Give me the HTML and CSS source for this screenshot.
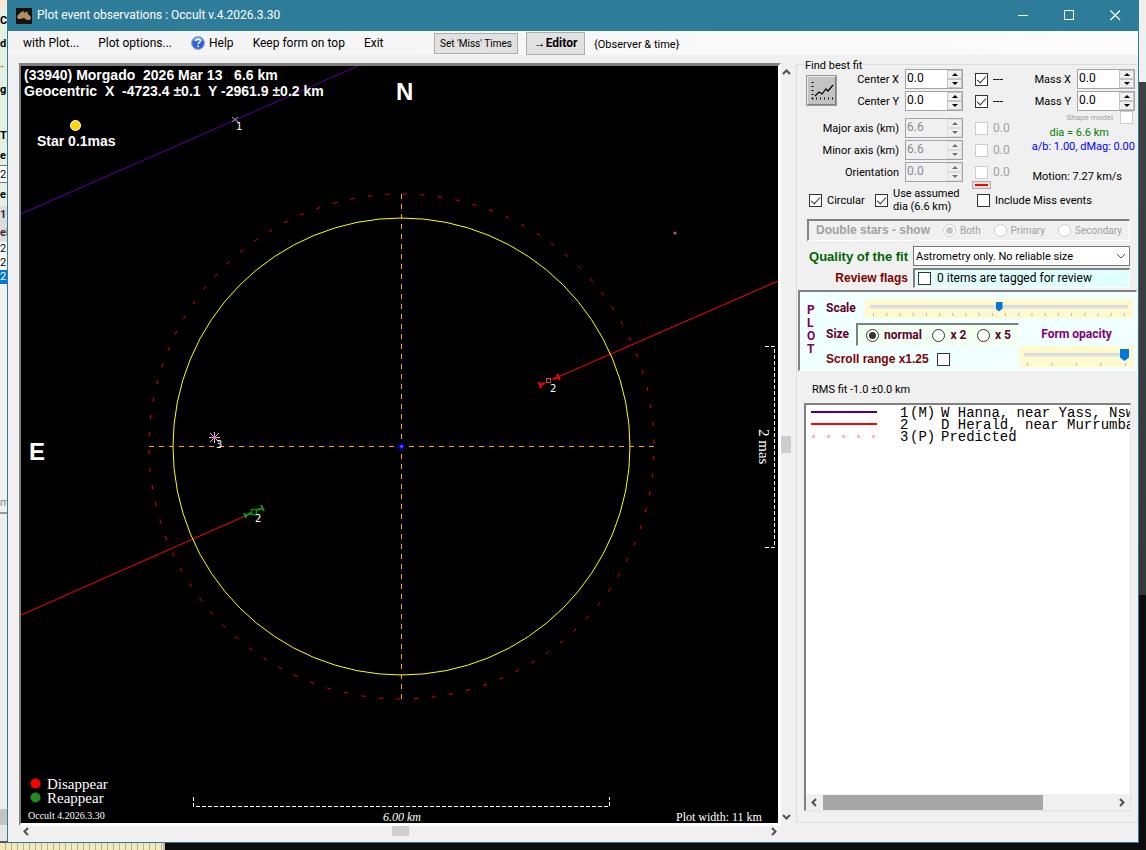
FILE: index.html
```html
<!DOCTYPE html>
<html lang="en">
<head>
    <meta charset="UTF-8">
    <meta name="viewport" content="width=device-width, initial-scale=1.0">
    <title>Plot event observations</title>
    <link rel="stylesheet" href="styles.css">
</head>
<body>
    <div class="desktop-row">
        <!-- edge of the window behind -->
        <div class="behind-left">
            <div class="peek peach"></div>
            <div class="peek tall">C</div>
            <div class="peek tall">d</div>
            <div class="peek tall orange">-</div>
            <div class="peek tall">g</div>
            <div class="peek tall"></div>
            <div class="peek tall">T</div>
            <div class="peek">e</div>
            <div class="peek boxed">2</div>
            <div class="peek tall">e</div>
            <div class="peek grey">1</div>
            <div class="peek grey">el</div>
            <div class="peek line">2</div>
            <div class="peek line">2</div>
            <div class="peek line selected">2</div>
            <div class="peek lower">m</div>
            <div class="peek rest"></div>
            <div class="peek thumb"></div>
            <div class="peek foot"></div>
        </div>

        <div class="window">
            <header class="titlebar">
                <svg class="app-icon" width="16" height="16" viewBox="0 0 16 16">
                    <rect width="16" height="16" fill="#15120f"/>
                    <path d="M1 8 L4 5 L7 3 L9 5 L11 3 L12 6 L15 9 L14 12 L11 12 L8 10 L4 11 L2 11 Z" fill="#b58d62"/>
                </svg>
                <h1>Plot event observations : Occult v.4.2026.3.30</h1>
                <button class="caption-btn" type="button" aria-label="Minimize">
                    <svg width="11" height="11"><path d="M0 5.5H10" stroke="#fff"/></svg>
                </button>
                <button class="caption-btn" type="button" aria-label="Maximize">
                    <svg width="11" height="11"><rect x="0.5" y="0.5" width="9" height="9" fill="none" stroke="#fff"/></svg>
                </button>
                <button class="caption-btn" type="button" aria-label="Close">
                    <svg width="11" height="11"><path d="M0.5 0.5L10 10M10 0.5L0.5 10" stroke="#fff" stroke-width="1.2"/></svg>
                </button>
            </header>

            <nav class="menubar">
                <button class="menu-item" type="button">with Plot...</button>
                <button class="menu-item" type="button">Plot options...</button>
                <button class="menu-item" type="button">
                    <svg width="14" height="14" viewBox="0 0 14 14">
                        <circle cx="7" cy="7" r="6.4" fill="#2c62d8" stroke="#8fa6cf"/>
                        <path d="M2 5a5 4 0 0 1 10 0" fill="#6d9bf0"/>
                        <path d="M4.8 5.2c0-3 4.6-2.8 4.6-.3 0 1.6-2.3 1.5-2.3 3.4M7.1 9.6v1.6" fill="none" stroke="#fff" stroke-width="1.5"/>
                    </svg>
                    Help
                </button>
                <button class="menu-item" type="button">Keep form on top</button>
                <button class="menu-item" type="button">Exit</button>
                <button class="tool-btn miss" type="button">Set 'Miss' Times</button>
                <button class="tool-btn editor" type="button">→Editor</button>
                <span class="observer">{Observer &amp; time}</span>
            </nav>

            <main class="content">
                <section class="plot-area">
                    <div class="plot-frame">
                        <svg class="plot" viewBox="21 66 757 757">
                            <!-- chords -->
                            <path d="M21 214L358 66" stroke="#4b0082" stroke-width="1.2"/>
                            <path d="M778 281L558 377M245 516L21 615" stroke="#ff0000"/>
                            <!-- fitted and predicted outlines -->
                            <circle cx="401.5" cy="446.5" r="228.5" fill="none" stroke="#ffff00"/>
                            <circle cx="401.5" cy="446.5" r="252.5" fill="none" stroke="#ff0000" stroke-dasharray="4 13.63" stroke-dashoffset="8"/>
                            <path d="M149 446.5H654M401.5 194V699" stroke="#ffa500" stroke-dasharray="5 5"/>
                            <circle cx="401.5" cy="446.5" r="2" fill="#ffa500" stroke="#0000ff" stroke-width="2"/>
                            <!-- event 2 disappear -->
                            <g stroke="#ff0000" stroke-width="2" fill="none">
                                <path d="M540 385L545 383M553 379L559 377M539 382L541 388M557 374L560 380"/>
                                <rect x="546.5" y="378.5" width="4" height="4" stroke="#cd4a3c" stroke-width="1"/>
                            </g>
                            <!-- event 2 reappear -->
                            <g stroke="#228b22" stroke-width="2" fill="none">
                                <path d="M245 516L251 513M257 510L263 508M244 513L246 518M261 505L264 511"/>
                                <rect x="251.5" y="509.5" width="5" height="5" stroke="#009000" stroke-width="1.5"/>
                            </g>
                            <path d="M232 117L238 122M238 117L232 122" stroke="#a9a9b4"/>
                            <path d="M214.5 432V443M210 433L219 442M219 433L210 442M209 437.5H220" stroke="#d8bfd8"/>
                            <circle cx="214.5" cy="437.5" r="1.8" fill="#ff69b4"/>
                            <circle cx="675" cy="233" r="1.5" fill="#cd5c5c"/>
                            <circle cx="75.5" cy="125.5" r="5" fill="#ffd700" stroke="#fff"/>
                            <!-- scale bars -->
                            <g stroke="#fff" fill="none" stroke-dasharray="4 2">
                                <path d="M193.5 797V806.5H609.5V797"/>
                                <path d="M765 346.5H774.5V547.5H765"/>
                            </g>
                            <circle cx="35.5" cy="783.5" r="5" fill="#ff0000"/>
                            <circle cx="35.5" cy="797.5" r="5" fill="#228b22"/>
                            <text class="heading" x="24" y="80">(33940) Morgado  2026 Mar 13   6.6 km</text>
                            <text class="heading" x="24" y="96">Geocentric  X  -4723.4 ±0.1  Y -2961.9 ±0.2 km</text>
                            <text class="heading" x="37" y="146">Star 0.1mas</text>
                            <text class="compass" x="396" y="100">N</text>
                            <text class="compass" x="29" y="460">E</text>
                            <text class="event" x="236" y="130">1</text>
                            <text class="event" x="550" y="392">2</text>
                            <text class="event" x="255" y="522">2</text>
                            <text class="event" x="216" y="448">3</text>
                            <text class="legend" x="47" y="789">Disappear</text>
                            <text class="legend" x="47" y="803">Reappear</text>
                            <text class="version" x="28" y="819">Occult 4.2026.3.30</text>
                            <text class="caption italic" x="383" y="821">6.00 km</text>
                            <text class="caption" x="676" y="821">Plot width: 11 km</text>
                            <text class="legend" transform="translate(759 429) rotate(90)">2 mas</text>
                        </svg>
                    </div>
                    <div class="scroll vertical">
                        <svg width="9" height="6"><path d="M1 5L4.5 1.5L8 5" class="chevron"/></svg>
                        <div class="scroll-thumb"></div>
                        <svg width="9" height="6"><path d="M1 1L4.5 4.5L8 1" class="chevron"/></svg>
                    </div>
                    <div class="scroll horizontal">
                        <svg width="6" height="9"><path d="M5 1L1.5 4.5L5 8" class="chevron"/></svg>
                        <div class="scroll-thumb"></div>
                        <svg width="6" height="9"><path d="M1 1L4.5 4.5L1 8" class="chevron"/></svg>
                    </div>
                </section>

                <form class="side">
                    <h2>Find best fit</h2>
                    <div class="fit">
                        <div class="fit-grid">
                            <button class="chart-btn" type="button" aria-label="Fit">
                                <svg width="26" height="26" viewBox="0 0 26 26">
                                    <path d="M3.5 5V22M3 21.5H24" stroke="#000" stroke-dasharray="1 3" stroke-width="2"/>
                                    <path d="M6 19L10 15L13 17L17 12L19 14L24 8" fill="none" stroke="#000" stroke-width="1.2"/>
                                </svg>
                            </button>
                            <label for="centerX">Center X</label>
                            <div class="spin"><input type="number" id="centerX" value="0.0" step="0.1"><span class="arrows"><button type="button" aria-label="Up"></button><button type="button" aria-label="Down"></button></span></div>
                            <input type="checkbox" id="fixX" checked>
                            <label class="value" for="fixX">---</label>
                            <label for="centerY">Center Y</label>
                            <div class="spin"><input type="number" id="centerY" value="0.0" step="0.1"><span class="arrows"><button type="button" aria-label="Up"></button><button type="button" aria-label="Down"></button></span></div>
                            <input type="checkbox" id="fixY" checked>
                            <label class="value" for="fixY">---</label>
                            <div class="grid-gap"></div>
                            <label class="wide" for="major">Major axis (km)</label>
                            <div class="spin"><input type="number" id="major" value="6.6" step="0.1" disabled><span class="arrows"><button type="button" aria-label="Up" disabled></button><button type="button" aria-label="Down" disabled></button></span></div>
                            <input type="checkbox" id="fixMajor" disabled>
                            <label class="value off" for="fixMajor">0.0</label>
                            <label class="wide" for="minor">Minor axis (km)</label>
                            <div class="spin"><input type="number" id="minor" value="6.6" step="0.1" disabled><span class="arrows"><button type="button" aria-label="Up" disabled></button><button type="button" aria-label="Down" disabled></button></span></div>
                            <input type="checkbox" id="fixMinor" disabled>
                            <label class="value off" for="fixMinor">0.0</label>
                            <label class="wide" for="orient">Orientation</label>
                            <div class="spin"><input type="number" id="orient" value="0.0" step="0.1" disabled><span class="arrows"><button type="button" aria-label="Up" disabled></button><button type="button" aria-label="Down" disabled></button></span></div>
                            <input type="checkbox" id="fixOrient" disabled>
                            <label class="value off" for="fixOrient">0.0</label>
                            <button class="red-btn" type="button" aria-label="Line colour"></button>
                        </div>
                        <div class="mass">
                            <div class="mass-row">
                                <label for="massX">Mass X</label>
                                <div class="spin"><input type="number" id="massX" value="0.0" step="0.1"><span class="arrows"><button type="button" aria-label="Up"></button><button type="button" aria-label="Down"></button></span></div>
                            </div>
                            <div class="mass-row">
                                <label for="massY">Mass Y</label>
                                <div class="spin"><input type="number" id="massY" value="0.0" step="0.1"><span class="arrows"><button type="button" aria-label="Up"></button><button type="button" aria-label="Down"></button></span></div>
                            </div>
                            <div class="shape">
                                <label for="shape">Shape model</label>
                                <input type="checkbox" id="shape" disabled>
                            </div>
                            <p class="dia">dia = 6.6 km</p>
                            <p class="ratio">a/b: 1.00, dMag: 0.00</p>
                            <p class="motion">Motion: 7.27 km/s</p>
                        </div>
                    </div>

                    <div class="checks">
                        <label class="circular"><input type="checkbox" checked> Circular</label>
                        <label class="assumed"><input type="checkbox" checked> <span>Use assumed<br>dia (6.6 km)</span></label>
                        <label><input type="checkbox"> Include Miss events</label>
                    </div>

                    <div class="double">
                        <span class="double-title">Double stars - show</span>
                        <label><input type="radio" name="stars" checked disabled> Both</label>
                        <label><input type="radio" name="stars" disabled> Primary</label>
                        <label><input type="radio" name="stars" disabled> Secondary</label>
                    </div>

                    <div class="quality">
                        <label class="green" for="quality">Quality of the fit</label>
                        <div class="select-wrap">
                            <select id="quality"><option>Astrometry only. No reliable size</option></select>
                            <svg width="10" height="6"><path d="M1 1L5 5L9 1" fill="none" stroke="#555"/></svg>
                        </div>
                        <span class="maroon">Review flags</span>
                        <label class="review"><input type="checkbox"> 0 items are tagged for review</label>
                    </div>

                    <div class="plot-box">
                        <div class="plot-word">P<br>L<br>O<br>T</div>
                        <div class="plot-controls">
                            <div class="scale-row">
                                <label for="scale">Scale</label>
                                <div class="slider">
                                    <input type="range" id="scale" min="0" max="100" value="50">
                                    <svg viewBox="0 0 253 3" preserveAspectRatio="none"><path d="M0 1.5H253" stroke="#b8b8b8" stroke-width="3" stroke-dasharray="1 12.26"/></svg>
                                </div>
                            </div>
                            <div class="lower-row">
                                <div class="size-col">
                                    <div class="size-row">
                                        <span>Size</span>
                                        <div class="size-box">
                                            <label><input type="radio" name="size" checked> normal</label>
                                            <label><input type="radio" name="size"> x 2</label>
                                            <label><input type="radio" name="size"> x 5</label>
                                        </div>
                                    </div>
                                    <label class="range">Scroll range x1.25 <input type="checkbox"></label>
                                </div>
                                <div class="opacity-col">
                                    <label for="opacity">Form opacity</label>
                                    <div class="slider small">
                                        <input type="range" id="opacity" min="0" max="100" value="100">
                                        <svg viewBox="0 0 95 3" preserveAspectRatio="none"><path d="M0 1.5H95" stroke="#b8b8b8" stroke-width="3" stroke-dasharray="1 22.5"/></svg>
                                    </div>
                                </div>
                            </div>
                        </div>
                    </div>

                    <p class="rms">RMS fit -1.0 ±0.0 km</p>

                    <div class="list">
                        <div class="rows">
                            <div class="list-row">
                                <svg width="66" height="12"><path d="M0 5H66" stroke="#4b0082" stroke-width="2"/></svg>
                                <span>1</span><span>(M)</span><span>W Hanna, near Yass, Nsw</span>
                            </div>
                            <div class="list-row">
                                <svg width="66" height="12"><path d="M0 5H66" stroke="#ff0000" stroke-width="2"/></svg>
                                <span>2</span><span></span><span>D Herald, near Murrumba</span>
                            </div>
                            <div class="list-row">
                                <svg width="66" height="12" fill="#fff" stroke="#ff69b4">
                                    <circle cx="2.5" cy="5.5" r="1"/><circle cx="17.5" cy="5.5" r="1"/><circle cx="32.5" cy="5.5" r="1"/><circle cx="47.5" cy="5.5" r="1"/><circle cx="62.5" cy="5.5" r="1"/>
                                </svg>
                                <span>3</span><span>(P)</span><span>Predicted</span>
                            </div>
                        </div>
                        <div class="list-scroll">
                            <svg width="6" height="9"><path d="M5 1L1.5 4.5L5 8" class="chevron"/></svg>
                            <div class="track"><div class="list-thumb"></div></div>
                            <svg width="6" height="9"><path d="M1 1L4.5 4.5L1 8" class="chevron"/></svg>
                        </div>
                    </div>
                </form>
            </main>
        </div>

        <div class="behind-right"></div>
    </div>
    <div class="behind-bottom"><div class="cream"></div></div>
</body>
</html>
```
FILE: styles.css
```css
* {
    box-sizing: border-box;
}

body {
    margin: 0;
    min-height: 100vh;
    display: flex;
    flex-direction: column;
    background-color: #0b0b0b;
    color: #000;
    font-family: Roboto, "Liberation Sans", sans-serif;
    font-size: 11px;
    line-height: 13px;
}

h1, h2, p {
    margin: 0;
    font-weight: 400;
}

button, input, select {
    font: inherit;
    color: inherit;
    margin: 0;
    padding: 0;
}

svg {
    display: block;
    flex: none;
}

/* windows behind */
.desktop-row {
    flex: 1;
    display: flex;
}

.behind-left {
    width: 7px;
    display: flex;
    flex-direction: column;
    background-color: #f0f0f0;
    overflow: hidden;
}

.peek {
    height: 18px;
    line-height: 18px;
    background-color: #e4f0e2;
    font-weight: 700;
    white-space: nowrap;
    flex: none;
}

.peek.peach {
    height: 9px;
    background-color: #fbe5d6;
}

.peek.tall {
    height: 23px;
    line-height: 23px;
}

.peek.orange {
    color: #d08020;
}

.peek.boxed {
    background-color: #fff;
    border: 1px solid #777;
    border-width: 1px 0;
    font-weight: 400;
}

.peek.grey {
    background-color: #ddd;
    color: #402040;
}

.peek.line {
    height: 14px;
    line-height: 14px;
    background-color: #fff;
    font-weight: 400;
}

.peek.selected {
    background-color: #0078d7;
    color: #fff;
}

.peek.lower {
    height: 230px;
    padding-top: 210px;
    background-color: #f0f0f0;
    color: #888;
    font-weight: 400;
    border-bottom: 2px solid #999;
}

.peek.rest {
    flex: 1;
    background-color: #eee;
}

.peek.thumb {
    height: 16px;
    background-color: #c3c3c3;
}

.peek.foot {
    background-color: #e6e6e6;
    border-bottom: 2px solid #555;
}

.behind-right {
    width: 7px;
    background: linear-gradient(#f0f0f0 82px, #404040 82px, #383838 595px, #0d0d0d 595px);
}

.behind-bottom {
    height: 7px;
    background-color: #0d0d0d;
}

.cream {
    width: 165px;
    height: 7px;
    background: repeating-linear-gradient(to right, #f3e9bd 0 5px, #b8b090 5px 6px);
    border-right: 2px solid #bbb;
}

/* main window */
.window {
    flex: 1;
    min-width: 0;
    display: flex;
    flex-direction: column;
    background-color: #f0f0f0;
    border: 1px solid #2d7d9a;
    border-top: 0;
}

.titlebar {
    height: 31px;
    display: flex;
    align-items: center;
    padding-left: 8px;
    background-color: #2d7d9a;
    color: #fff;
}

.titlebar h1 {
    flex: 1;
    padding-left: 5px;
    font-size: 12px;
}

.caption-btn {
    width: 46px;
    height: 31px;
    display: flex;
    align-items: center;
    justify-content: center;
    background: none;
    border: 0;
}

.menubar {
    height: 24px;
    display: flex;
    align-items: center;
    padding-left: 15px;
    background: linear-gradient(to right, #f3f3f3, #fcfcfc);
}

.menu-item {
    display: flex;
    align-items: center;
    gap: 4px;
    margin-right: 19px;
    border: 0;
    background: none;
    font-size: 12px;
    white-space: nowrap;
}

.tool-btn {
    background-color: #e1e1e1;
    border: 1px solid #adadad;
    white-space: nowrap;
}

.miss {
    width: 84px;
    height: 21px;
    margin-left: auto;
    font-size: 10px;
}

.editor {
    width: 59px;
    height: 23px;
    margin: 0 9px 0 8px;
    font-size: 12px;
    font-weight: 700;
}

.observer {
    width: 544px;
    padding-top: 3px;
    white-space: nowrap;
}

.content {
    flex: 1;
    display: flex;
    padding: 8px 0 6px 11px;
}

/* plot */
.plot-area {
    flex: 1;
    min-width: 0;
    display: grid;
    grid-template-columns: 1fr 10px;
    grid-template-rows: 1fr 10px;
    margin-right: 5px;
}

.plot-frame {
    min-height: 0;
    background-color: #000;
    border: 3px solid #fff;
    border-top-color: #808080;
    border-left: 2px solid #808080;
}

.plot {
    width: 100%;
    height: 100%;
}

.plot text {
    fill: #fff;
    white-space: pre;
}

.heading {
    font: 700 14px "Liberation Sans", sans-serif;
}

.compass {
    font: 700 24px "Liberation Sans", sans-serif;
}

.event {
    font: 10px "DejaVu Sans", sans-serif;
}

.legend {
    font: 15px "Liberation Serif", serif;
}

.caption {
    font: 12px "Liberation Serif", serif;
}

.caption.italic {
    font-style: italic;
}

.version {
    font: 10px "Liberation Serif", serif;
}

.chevron {
    fill: none;
    stroke: #505050;
    stroke-width: 2;
}

.scroll {
    display: flex;
    align-items: center;
    justify-content: space-between;
}

.scroll.vertical {
    flex-direction: column;
    padding: 6px 0;
}

.scroll.horizontal {
    padding: 0 4px;
}

.scroll-thumb {
    background-color: #cdcdcd;
}

.vertical .scroll-thumb {
    width: 10px;
    height: 17px;
}

.horizontal .scroll-thumb {
    width: 17px;
    height: 10px;
}

/* side panel */
.side {
    width: 342px;
    display: flex;
    flex-direction: column;
    margin: 1px 0 13px;
    padding: 0 1px 11px 8px;
    border: 1px solid #dcdcdc;
    border-right: 0;
}

.side h2 {
    width: 57px;
    height: 4px;
    margin-top: -1px;
    background-color: #f0f0f0;
    font-size: 11px;
    line-height: 3px;
    white-space: nowrap;
}

.fit {
    display: flex;
    justify-content: space-between;
    height: 119px;
    padding: 1px 2px 0 1px;
}

.fit-grid {
    display: grid;
    grid-template-columns: 31px 68px 58px 25px 25px;
    row-gap: 2px;
    align-items: center;
    align-content: start;
}

.fit-grid label {
    grid-column: 2;
    padding-right: 6px;
    text-align: right;
    white-space: nowrap;
}

.fit-grid .wide {
    grid-column: 1 / 3;
}

.fit-grid .value {
    grid-column: 5;
    padding: 0 0 0 5px;
    text-align: left;
    font-size: 12px;
}

.fit-grid input[type="checkbox"] {
    justify-self: end;
}

.grid-gap {
    grid-column: 1 / 6;
    height: 3px;
}

.value.off {
    color: #a0a0a0;
}

.chart-btn {
    grid-column: 1;
    grid-row: 1 / 3;
    width: 31px;
    height: 31px;
    display: flex;
    align-items: center;
    justify-content: center;
    background-color: #c3c3c3;
    border: 2px solid;
    border-color: #e8e8e8 #808080 #808080 #e8e8e8;
    outline: 1px solid #999;
    outline-offset: -1px;
}

.red-btn {
    grid-column: 4;
    width: 19px;
    height: 8px;
    margin: -3px 0 0 9px;
    background: linear-gradient(#ff0000, #ff0000) center / 13px 2px no-repeat #e1e1e1;
    border: 1px solid #adadad;
}

.spin {
    width: 58px;
    height: 20px;
    display: flex;
    background-color: #fff;
    border: 1px solid #a0a4aa;
    font-size: 12px;
}

.spin input {
    flex: 1;
    min-width: 0;
    padding: 0 0 1px 1px;
    border: 0;
    background: none;
    appearance: textfield;
}

.spin input::-webkit-inner-spin-button {
    display: none;
}

.spin:has(:disabled) {
    background-color: #f0f0f0;
    color: #8a8a8a;
}

.arrows {
    width: 15px;
    display: flex;
    flex-direction: column;
}

.arrows button {
    flex: 1;
    display: flex;
    align-items: center;
    justify-content: center;
    border: 1px solid #c4c4c4;
    background-color: #f0f0f0;
}

.arrows button::before {
    content: "";
    border: 3px solid transparent;
    border-top: 0;
    border-bottom-color: #000;
}

.arrows button:last-child::before {
    border: 3px solid transparent;
    border-bottom: 0;
    border-top-color: #000;
}

.arrows button:disabled {
    border-color: #ddd;
}

.arrows button:disabled::before {
    border-bottom-color: #707070;
}

.arrows button:disabled:last-child::before {
    border-top-color: #707070;
}

input[type="checkbox"], input[type="radio"] {
    appearance: none;
    flex: none;
    width: 13px;
    height: 13px;
    display: flex;
    align-items: center;
    justify-content: center;
    background-color: #fff;
    border: 1px solid #333;
}

input[type="radio"] {
    border-radius: 50%;
}

input[type="checkbox"]:checked::before {
    content: "";
    width: 4px;
    height: 8px;
    margin-top: -2px;
    border: solid #333;
    border-width: 0 1px 1px 0;
    transform: rotate(42deg);
}

input[type="radio"]:checked::before {
    content: "";
    width: 7px;
    height: 7px;
    border-radius: 50%;
    background-color: #333;
}

input:disabled[type="checkbox"], input:disabled[type="radio"] {
    border-color: #ccc;
}

input:disabled[type="radio"]::before {
    background-color: #c4c4c4;
}

.mass {
    display: flex;
    flex-direction: column;
    align-items: flex-end;
}

.mass-row {
    display: flex;
    align-items: center;
    gap: 6px;
    margin-bottom: 2px;
}

.shape {
    display: flex;
    align-items: center;
    gap: 7px;
    margin: -2px 2px 0 0;
    color: #a0a0a0;
    font-size: 8px;
}

.dia {
    margin: 2px 26px 1px 0;
    color: #008000;
}

.ratio {
    color: #0000ff;
}

.motion {
    margin: 17px 13px 0 0;
}

.checks {
    display: flex;
    height: 26px;
    align-items: center;
    padding-left: 4px;
}

.checks label {
    display: flex;
    align-items: center;
    gap: 5px;
    white-space: nowrap;
}

.checks .circular {
    width: 66px;
}

.checks .assumed {
    width: 102px;
}

.double {
    height: 22px;
    display: flex;
    align-items: center;
    justify-content: space-between;
    margin: 6px 7px 5px 2px;
    padding: 0 7px;
    border: 1px solid #fff;
    border-top: 2px solid #808080;
    border-left: 2px solid #808080;
    color: #a0a0a0;
    font-size: 10px;
}

.double label {
    display: flex;
    align-items: center;
    gap: 4px;
}

.double-title {
    font-family: "Liberation Sans", sans-serif;
    font-size: 12px;
    font-weight: 700;
}

.quality {
    display: grid;
    grid-template-columns: 103px 1fr;
    grid-template-rows: 20px 20px;
    gap: 2px 5px;
    align-items: center;
    margin-right: 7px;
    text-align: right;
    font-weight: 700;
}

.green {
    color: #006400;
    font-family: "Liberation Sans", sans-serif;
    font-size: 13px;
    white-space: nowrap;
}

.maroon {
    color: #800000;
    font-family: "Liberation Sans", sans-serif;
    font-size: 12px;
}

.select-wrap {
    display: grid;
    align-items: center;
}

.select-wrap select, .select-wrap svg {
    grid-area: 1 / 1;
}

.select-wrap svg {
    justify-self: end;
    margin-right: 4px;
    pointer-events: none;
}

.select-wrap select {
    width: 100%;
    height: 20px;
    padding-left: 2px;
    appearance: none;
    background-color: #fff;
    border: 1px solid #777;
    border-radius: 0;
    font-weight: 400;
}

.review {
    height: 20px;
    display: flex;
    align-items: center;
    gap: 6px;
    padding-left: 3px;
    background-color: #e0ffff;
    border: 1px solid #fff;
    border-top: 2px solid #808080;
    border-left: 2px solid #808080;
    font-size: 12px;
    font-weight: 400;
}

.plot-box {
    height: 81px;
    display: flex;
    margin: 2px 0 0 -7px;
    padding: 7px 3px 3px 7px;
    background-color: #f0ffff;
    border: 1px solid #fff;
    border-top: 2px solid #808080;
    border-left: 2px solid #808080;
    color: #600030;
    font-size: 12px;
    font-weight: 700;
}

.plot-word {
    width: 19px;
    padding-top: 5px;
    color: #800060;
}

.plot-controls {
    flex: 1;
    min-width: 0;
}

.scale-row {
    display: flex;
    align-items: center;
    gap: 7px;
}

.scale-row > label {
    width: 32px;
}

.slider {
    flex: 1;
    height: 19px;
    padding: 3px 5px 2px;
    background-color: #fffacd;
}

.slider input {
    display: block;
    width: 100%;
    height: 9px;
    appearance: none;
    background: linear-gradient(#d6d6d6, #e7eaea) center / 100% 4px no-repeat;
}

.slider input::-webkit-slider-thumb {
    appearance: none;
    width: 7px;
    height: 10px;
    background-color: #0078d7;
    clip-path: polygon(0 0, 100% 0, 100% 70%, 50% 100%, 0 70%);
}

.slider svg {
    width: calc(100% - 6px);
    height: 3px;
    margin: 2px 3px 0;
}

.slider.small {
    flex: none;
    width: 115px;
    height: 21px;
}

.small input {
    height: 12px;
}

.small input::-webkit-slider-thumb {
    width: 9px;
    height: 12px;
}

.lower-row {
    display: flex;
    justify-content: space-between;
    padding-top: 5px;
}

.size-row {
    display: flex;
    align-items: center;
}

.size-row > span {
    width: 30px;
}

.size-box {
    width: 163px;
    height: 23px;
    display: flex;
    align-items: center;
    justify-content: space-between;
    padding: 0 7px 0 8px;
    background-color: #f0fff0;
    border: 1px solid #fff;
    border-top: 2px solid #808080;
    border-left: 2px solid #808080;
}

.size-box label {
    display: flex;
    align-items: center;
    gap: 5px;
}

.range {
    display: flex;
    align-items: center;
    gap: 8px;
    margin-top: 7px;
    color: #800000;
    font-family: "Liberation Sans", sans-serif;
}

.opacity-col {
    display: flex;
    flex-direction: column;
    align-items: center;
    gap: 5px;
    padding-top: 5px;
    color: #800080;
}

.rms {
    padding: 12px 0 7px 7px;
}

.list {
    flex: 1;
    display: flex;
    flex-direction: column;
    margin: 0 6px 0 -1px;
    background-color: #fff;
    border: 1px solid #e3e3e3;
    border-top: 2px solid #808080;
    border-left: 2px solid #808080;
}

.rows {
    flex: 1;
    padding: 2px 0 0 5px;
    overflow: hidden;
}

.list-row {
    display: grid;
    grid-template-columns: 89px 10px 31px 1fr;
    height: 12px;
    font: 14px/12px "Liberation Mono", monospace;
    white-space: pre;
}

.list-scroll {
    height: 16px;
    display: flex;
    align-items: center;
    padding: 0 5px;
    background-color: #f0f0f0;
}

.track {
    flex: 1;
    padding: 0 6px;
}

.list-thumb {
    width: 76%;
    height: 15px;
    background-color: #a6a6a6;
}
```
